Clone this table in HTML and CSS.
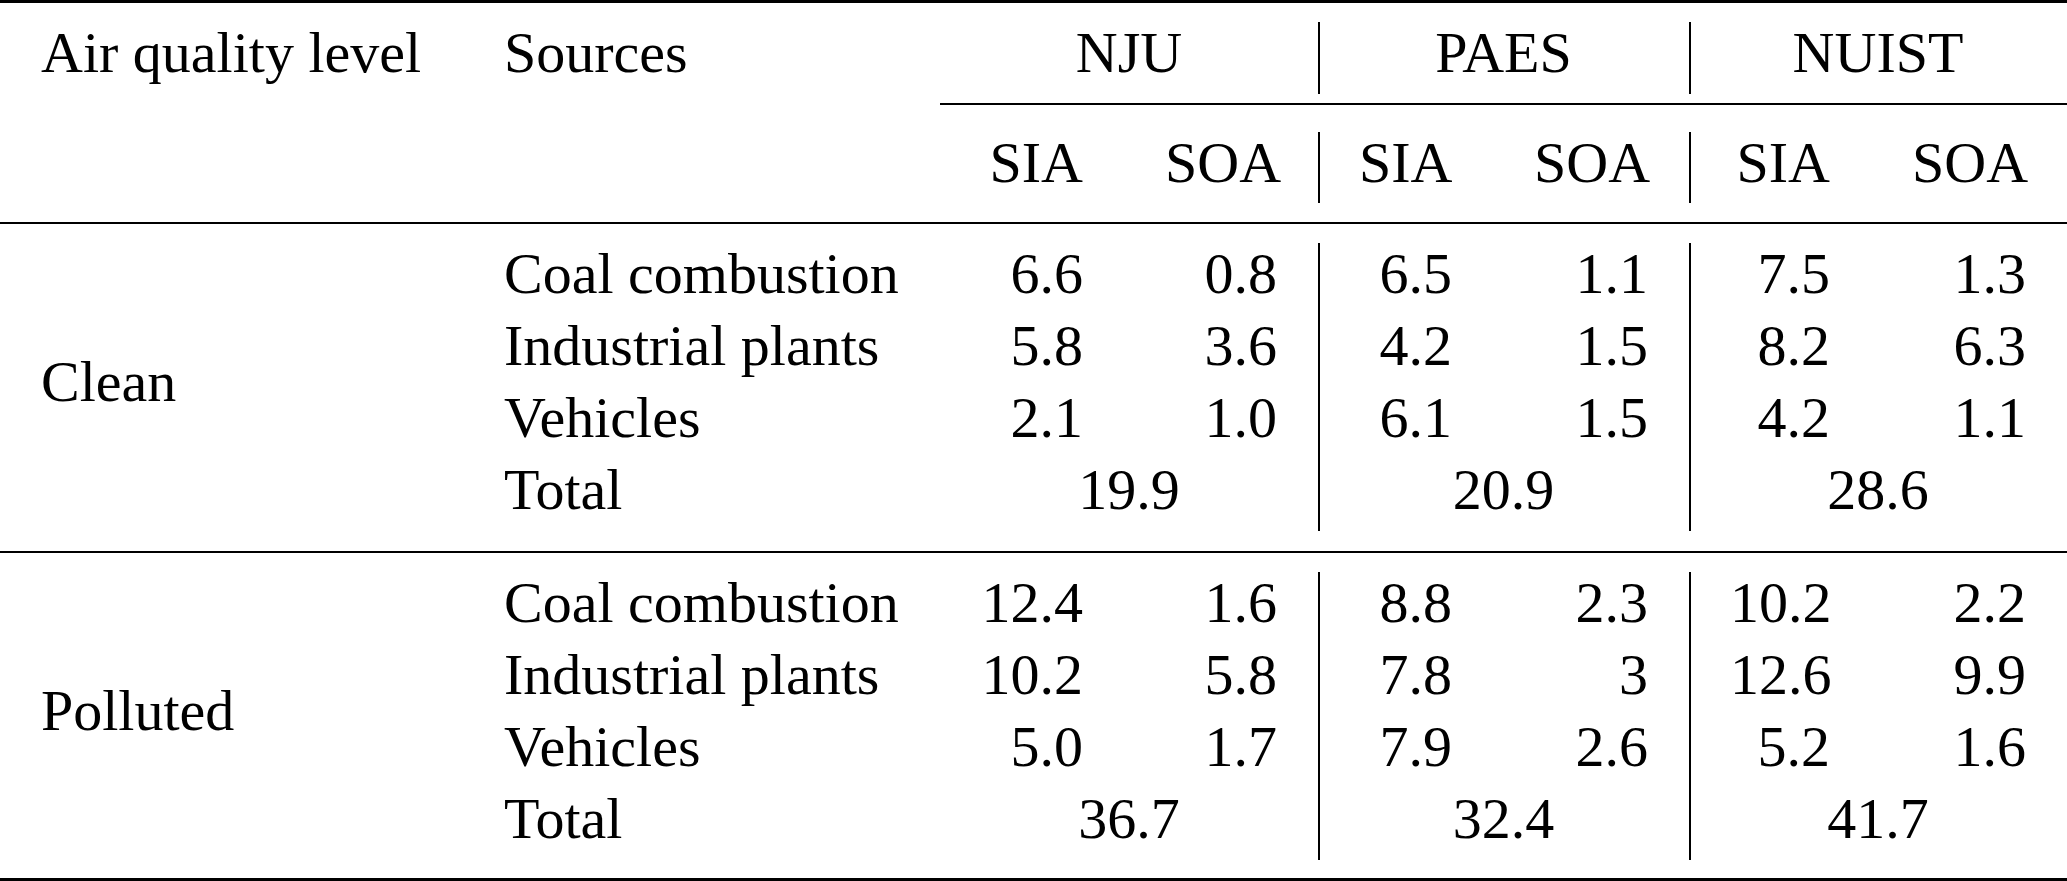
FILE: index.html
```html
<!DOCTYPE html>
<html lang="en">
<head>
<meta charset="utf-8">
<title>Air quality sources</title>
<link rel="stylesheet" href="styles.css">
</head>
<body>
<table class="tbl">
  <colgroup>
    <col class="w-aq">
    <col class="w-src">
    <col class="w-a">
    <col class="w-b">
    <col class="w-c">
    <col class="w-d">
    <col class="w-e">
    <col class="w-f">
  </colgroup>
  <tbody>
    <tr class="rule thick"><td colspan="8"></td></tr>
    <tr class="gap g19"><td colspan="8"></td></tr>
    <tr class="row">
      <td>Air quality level</td>
      <td>Sources</td>
      <td colspan="2" class="c">NJU</td>
      <td colspan="2" class="c vl">PAES</td>
      <td colspan="2" class="c vl">NUIST</td>
    </tr>
    <tr class="gap g9"><td colspan="8"></td></tr>
    <tr class="rule thin"><td colspan="2" class="blank"></td><td colspan="6"></td></tr>
    <tr class="gap g27"><td colspan="8"></td></tr>
    <tr class="row short">
      <td></td>
      <td></td>
      <td class="r">SIA</td>
      <td class="r">SOA</td>
      <td class="r vl">SIA</td>
      <td class="r">SOA</td>
      <td class="r vl">SIA</td>
      <td class="r">SOA</td>
    </tr>
    <tr class="gap g19"><td colspan="8"></td></tr>
    <tr class="rule thin"><td colspan="8"></td></tr>
    <tr class="gap g19"><td colspan="8"></td></tr>

    <tr class="row">
      <td rowspan="4" class="group">Clean</td>
      <td>Coal combustion</td>
      <td class="r">6.6</td><td class="r">0.8</td>
      <td class="r vl">6.5</td><td class="r">1.1</td>
      <td class="r vl">7.5</td><td class="r">1.3</td>
    </tr>
    <tr class="row">
      <td>Industrial plants</td>
      <td class="r">5.8</td><td class="r">3.6</td>
      <td class="r vl">4.2</td><td class="r">1.5</td>
      <td class="r vl">8.2</td><td class="r">6.3</td>
    </tr>
    <tr class="row">
      <td>Vehicles</td>
      <td class="r">2.1</td><td class="r">1.0</td>
      <td class="r vl">6.1</td><td class="r">1.5</td>
      <td class="r vl">4.2</td><td class="r">1.1</td>
    </tr>
    <tr class="row">
      <td>Total</td>
      <td colspan="2" class="c">19.9</td>
      <td colspan="2" class="c vl">20.9</td>
      <td colspan="2" class="c vl">28.6</td>
    </tr>

    <tr class="gap g20"><td colspan="8"></td></tr>
    <tr class="rule thin"><td colspan="8"></td></tr>
    <tr class="gap g19"><td colspan="8"></td></tr>

    <tr class="row">
      <td rowspan="4" class="group">Polluted</td>
      <td>Coal combustion</td>
      <td class="r">12.4</td><td class="r">1.6</td>
      <td class="r vl">8.8</td><td class="r">2.3</td>
      <td class="r vl">10.2</td><td class="r">2.2</td>
    </tr>
    <tr class="row">
      <td>Industrial plants</td>
      <td class="r">10.2</td><td class="r">5.8</td>
      <td class="r vl">7.8</td><td class="r">3</td>
      <td class="r vl">12.6</td><td class="r">9.9</td>
    </tr>
    <tr class="row">
      <td>Vehicles</td>
      <td class="r">5.0</td><td class="r">1.7</td>
      <td class="r vl">7.9</td><td class="r">2.6</td>
      <td class="r vl">5.2</td><td class="r">1.6</td>
    </tr>
    <tr class="row">
      <td>Total</td>
      <td colspan="2" class="c">36.7</td>
      <td colspan="2" class="c vl">32.4</td>
      <td colspan="2" class="c vl">41.7</td>
    </tr>

    <tr class="gap g18"><td colspan="8"></td></tr>
    <tr class="rule thick"><td colspan="8"></td></tr>
  </tbody>
</table>
</body>
</html>
```

FILE: styles.css
```css
html, body {
  margin: 0;
  padding: 0;
  background: #ffffff;
}

.tbl {
  border-collapse: separate;
  border-spacing: 0;
  table-layout: fixed;
  width: 2067px;
  font-family: "Liberation Serif", "Times New Roman", serif;
  font-size: 58px;
  color: #000000;
}

.w-aq { width: 463px; }
.w-src { width: 477px; }
.w-a { width: 184px; }
.w-b { width: 194px; }
.w-c { width: 175px; }
.w-d { width: 196px; }
.w-e { width: 182px; }
.w-f { width: 196px; }

.row td {
  padding: 0 41px 10px 41px;
  line-height: 62px;
  height: 62px;
  vertical-align: top;
  white-space: nowrap;
  text-align: left;
}

.row.short td {
  padding-bottom: 9px;
}

.row td.group {
  vertical-align: middle;
}

.row td.r { text-align: right; }
.row td.c { text-align: center; }

.row td.vl {
  border-left: 2px solid #000000;
  padding-left: 39px;
}

.gap td,
.rule td {
  padding: 0;
  font-size: 0;
  line-height: 0;
}

.g9 td { height: 9px; }
.g18 td { height: 18px; }
.g19 td { height: 19px; }
.g20 td { height: 20px; }
.g27 td { height: 27px; }

.rule td { background: #000000; }
.rule td.blank { background: transparent; }
.rule.thick td { height: 3px; }
.rule.thin td { height: 2px; }
```
